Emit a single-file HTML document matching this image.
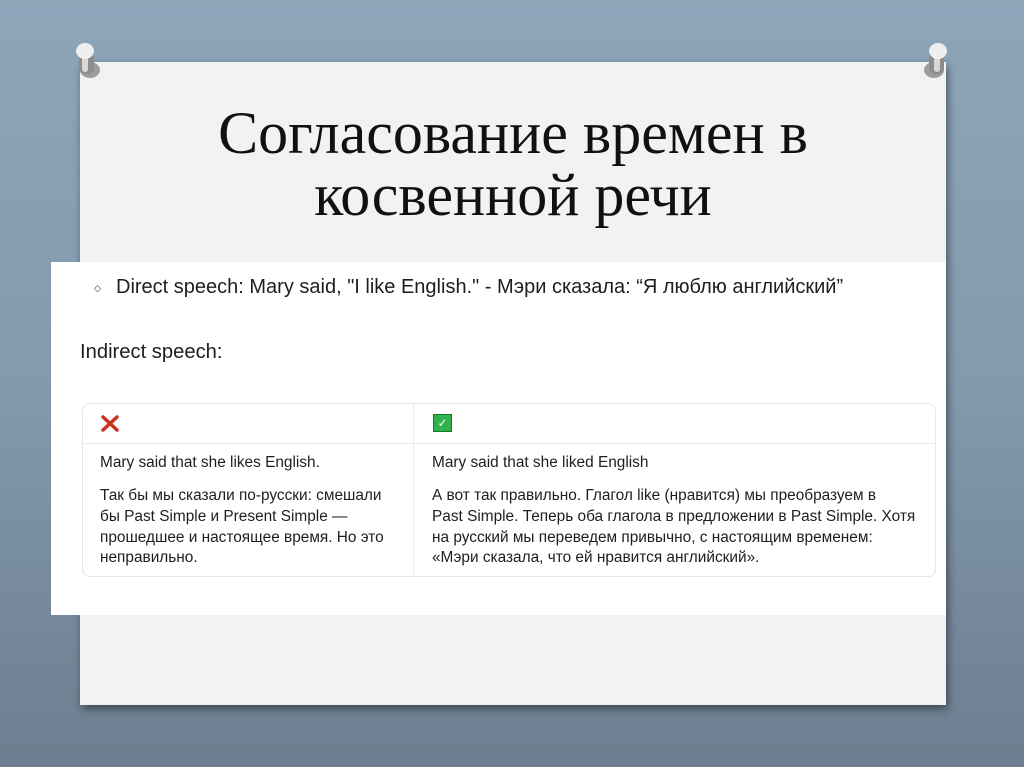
<!DOCTYPE html>
<html><head><meta charset="utf-8"><style>
*{margin:0;padding:0;box-sizing:border-box}
body{width:1024px;height:767px;overflow:hidden;position:relative;background:linear-gradient(180deg,#8ea5ba 0%,#8399ad 50%,#6c7e8f 100%);font-family:"Liberation Sans","DejaVu Sans",sans-serif}
.paper{position:absolute;left:80px;top:62px;width:866px;height:643px;background:#f2f2f2;box-shadow:2px 4px 8px rgba(0,0,0,.45)}
.title{position:absolute;left:80px;width:866px;top:102px;text-align:center;font-family:"Liberation Serif",serif;font-size:60px;line-height:62px;color:#111}
.img{position:absolute;left:51px;top:262px;width:895px;height:353px;background:#fff}
.t{position:absolute;white-space:nowrap;color:#1e1e1e}
.pin{position:absolute;width:30px;height:42px}
.box{position:absolute;left:82px;top:403px;width:854px;height:174px;border:1px solid #e6e6e6;border-radius:8px}
.hl{position:absolute;left:82px;top:443px;width:854px;height:1px;background:#eaeaea}
.vl{position:absolute;left:413px;top:403px;width:1px;height:174px;background:#eaeaea}
.s{font-size:15.4px;line-height:20.8px}
</style></head><body>
<div class="paper"></div>
<svg class="pin" style="left:70px;top:40px" viewBox="0 0 30 42"><ellipse cx="20" cy="30" rx="10" ry="8" fill="rgba(0,0,0,.35)"/><rect x="9" y="10" width="15" height="24" rx="6" fill="#8c8c8c"/><rect x="12" y="12" width="6" height="20" rx="3" fill="#d8d8d8"/><ellipse cx="15" cy="11" rx="9" ry="8" fill="#efefef"/></svg>
<svg class="pin" style="left:922px;top:40px" viewBox="0 0 30 42"><ellipse cx="12" cy="30" rx="10" ry="8" fill="rgba(0,0,0,.35)"/><rect x="7" y="10" width="15" height="24" rx="6" fill="#8c8c8c"/><rect x="12" y="12" width="6" height="20" rx="3" fill="#d8d8d8"/><ellipse cx="16" cy="11" rx="9" ry="8" fill="#efefef"/></svg>
<div class="title">Согласование времен в<br>косвенной речи</div>
<div class="img"></div>
<div class="t" style="left:94px;top:283px;font-size:9px">◇</div>
<div class="t" style="left:116px;top:276px;font-size:20px">Direct speech: Mary said, "I like English." - Мэри сказала: “Я люблю английский”</div>
<div class="t" style="left:80px;top:341px;font-size:20.2px">Indirect speech:</div>
<div class="box"></div><div class="hl"></div><div class="vl"></div>
<svg style="position:absolute;left:101px;top:415px" width="18" height="17" viewBox="0 0 18 17"><path d="M2 2L16 15M16 2L2 15" stroke="#c8321e" stroke-width="3.5" stroke-linecap="round"/></svg>
<div style="position:absolute;left:433px;top:414px;width:19px;height:18px;background:#2fb34a;border:1px solid #167a2a;color:#fff;font-size:12px;line-height:16px;text-align:center">✓</div>
<div class="t s" style="left:100px;top:453px">Mary said that she likes English.</div>
<div class="t s" style="left:100px;top:486px">Так бы мы сказали по-русски: смешали<br>бы Past Simple и Present Simple —<br>прошедшее и настоящее время. Но это<br>неправильно.</div>
<div class="t s" style="left:432px;top:453px">Mary said that she liked English</div>
<div class="t s" style="left:432px;top:486px">А вот так правильно. Глагол like (нравится) мы преобразуем в<br>Past Simple. Теперь оба глагола в предложении в Past Simple. Хотя<br>на русский мы переведем привычно, с настоящим временем:<br>«Мэри сказала, что ей нравится английский».</div>
</body></html>
